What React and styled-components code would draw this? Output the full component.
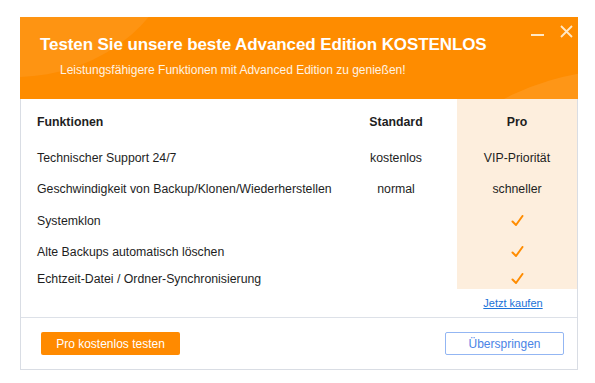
import React from "react";
import styled, { createGlobalStyle } from "styled-components";

const Global = createGlobalStyle`
  body {
    margin: 0;
    background: #ffffff;
    font-family: "Liberation Sans", Arial, sans-serif;
  }
`

const Dialog = styled.div`
  margin: 17px 0 0 20px;
  width: 558px;
  border: 1px solid #d9dde4;
  border-top: none;
  box-sizing: border-box;
  background: #fff;
`

const Header = styled.div`
  position: relative;
  overflow: hidden;
  height: 82px;
  margin: 0 -1px;
  background: #fe8c00;
  color: #fff;
  padding: 18px 0 0 20px;
  box-sizing: border-box;

  &::before {
    content: "";
    position: absolute;
    left: -170px;
    top: -230px;
    width: 330px;
    height: 290px;
    border-radius: 50%;
    background: rgba(255, 255, 255, 0.07);
  }
  &::after {
    content: "";
    position: absolute;
    left: 400px;
    top: 52px;
    width: 420px;
    height: 300px;
    border-radius: 50%;
    background: rgba(255, 255, 255, 0.09);
  }
`

const Title = styled.h1`
  position: relative;
  margin: 0;
  font-size: 17px;
  font-weight: bold;
  line-height: 20px;
  letter-spacing: -0.1px;
`

const Subtitle = styled.p`
  position: relative;
  margin: 7px 0 0 20px;
  font-size: 12px;
  line-height: 16px;
  color: #fff3e4;
`

const WinButtons = styled.div`
  position: absolute;
  top: 6px;
  right: 3px;
  display: flex;
  gap: 10px;
  z-index: 1;
`

const WinBtn = styled.svg`
  width: 18px;
  height: 18px;
  display: block;
`

const Table = styled.div`
  display: flex;
  flex-direction: column;
`

const Row = styled.div`
  display: grid;
  grid-template-columns: 1fr 122px 120px;
  height: ${p => p.h}px;
  align-items: stretch;
  font-size: 12.3px;
  color: #1e1e1e;
`

const Cell = styled.div`
  display: flex;
  align-items: center;
  justify-content: ${p => (p.left ? "flex-start" : "center")};
  padding-left: ${p => (p.left ? "16px" : "0")};
  padding-top: ${p => p.shift || 0}px;
  font-weight: ${p => (p.bold ? "bold" : "normal")};
  background: ${p => (p.pro ? "#fdeedd" : "transparent")};
  box-sizing: border-box;
`

const BuyRow = styled.div`
  display: flex;
  justify-content: flex-end;
  height: 28px;
  border-bottom: 1px solid #dde1e8;
`

const BuyLink = styled.a`
  width: 120px;
  margin-right: 4px;
  text-align: center;
  font-size: 11px;
  line-height: 28px;
  color: #1b72d8;
  text-decoration: underline;
  cursor: pointer;
`

const Footer = styled.div`
  display: flex;
  justify-content: space-between;
  align-items: center;
  padding: 14px 13px 14px 20px;
`

const OrangeButton = styled.button`
  width: 139px;
  height: 23px;
  border: none;
  border-radius: 2px;
  background: #ff8a00;
  color: #fff;
  font-family: "Liberation Sans", Arial, sans-serif;
  font-size: 12px;
  padding: 0;
`

const GhostButton = styled.button`
  width: 119px;
  height: 23px;
  border: 1px solid #93b6f3;
  border-radius: 2px;
  background: #fff;
  color: #4a84e6;
  font-family: "Liberation Sans", Arial, sans-serif;
  font-size: 12px;
  padding: 0;
`

const Check = () => (
  <svg width="13" height="12" viewBox="0 0 13 12">
    <path d="M1.5 6.5 L5 10 L11.5 1" fill="none" stroke="#ff8c00" strokeWidth="2" strokeLinecap="round" strokeLinejoin="round" />
  </svg>
)

const rows = [
  { name: "Technischer Support 24/7", std: "kostenlos", pro: "VIP-Priorität", h: 30 },
  { name: "Geschwindigkeit von Backup/Klonen/Wiederherstellen", std: "normal", pro: "schneller", h: 32 },
  { name: "Systemklon", std: "", pro: <Check />, h: 32 },
  { name: "Alte Backups automatisch löschen", std: "", pro: <Check />, h: 30 },
  { name: "Echtzeit-Datei / Ordner-Synchronisierung", std: "", pro: <Check />, h: 22, shift: 1 },
]

export default function App() {
  return (
    <>
      <Global />
      <Dialog>
        <Header>
          <WinButtons>
            <WinBtn viewBox="0 0 18 18">
              <path d="M2 12 H15" stroke="#ffe8c6" strokeWidth="2" />
            </WinBtn>
            <WinBtn viewBox="0 0 18 18">
              <path d="M4 3 L15 14 M15 3 L4 14" stroke="#ffe8c6" strokeWidth="1.8" />
            </WinBtn>
          </WinButtons>
          <Title>Testen Sie unsere beste Advanced Edition KOSTENLOS</Title>
          <Subtitle>Leistungsfähigere Funktionen mit Advanced Edition zu genießen!</Subtitle>
        </Header>
        <Table>
          <Row h={44}>
            <Cell left bold shift={2}>Funktionen</Cell>
            <Cell bold shift={2}>Standard</Cell>
            <Cell bold pro shift={2}>Pro</Cell>
          </Row>
          {rows.map(r => (
            <Row key={r.name} h={r.h}>
              <Cell left shift={r.shift}>{r.name}</Cell>
              <Cell shift={r.shift}>{r.std}</Cell>
              <Cell pro shift={r.shift}>{r.pro}</Cell>
            </Row>
          ))}
        </Table>
        <BuyRow>
          <BuyLink>Jetzt kaufen</BuyLink>
        </BuyRow>
        <Footer>
          <OrangeButton>Pro kostenlos testen</OrangeButton>
          <GhostButton>Überspringen</GhostButton>
        </Footer>
      </Dialog>
    </>
  )
}
